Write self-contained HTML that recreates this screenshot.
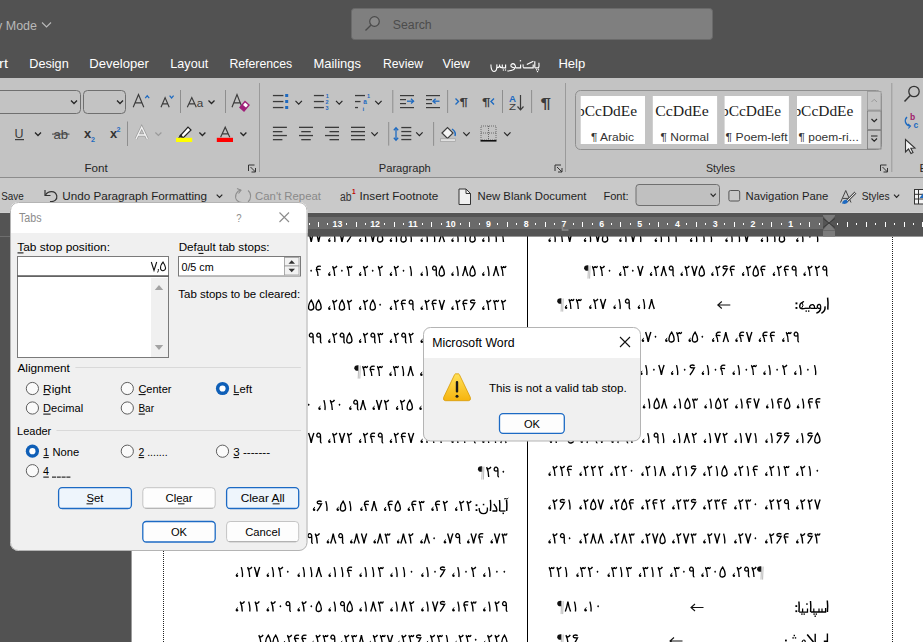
<!DOCTYPE html>
<html><head><meta charset="utf-8"><style>
html,body{margin:0;padding:0;width:923px;height:642px;overflow:hidden;background:#525252}
svg{display:block;font-family:"Liberation Sans",sans-serif}
</style></head><body>
<svg width="923" height="642" viewBox="0 0 923 642">
<rect x="0" y="0" width="923" height="78" fill="#525252" />
<rect x="0" y="78" width="923" height="100" fill="#c3c3c3" />
<rect x="0" y="177" width="923" height="1" fill="#8c8c8c" />
<rect x="0" y="178" width="923" height="35" fill="#c9c9c9" />
<rect x="0" y="212" width="923" height="1" fill="#cfcfcf" />
<text x="-4" y="29.5" font-size="12.5" fill="#b9b9b9" textLength="41" lengthAdjust="spacingAndGlyphs" >y Mode</text>
<path d="M42,22.5 L46.5,27 L51,22.5" fill="none" stroke="#b9b9b9" stroke-width="1.1" />
<rect x="351.5" y="8.5" width="361" height="31" fill="#7f7f7f" stroke="#6a6a6a" stroke-width="1" rx="3" />
<circle cx="374.5" cy="21.5" r="4.8" fill="#8a8a8a" stroke="#4a4a4a" stroke-width="1.2"/>
<line x1="370.8" y1="25.2" x2="365.5" y2="30.5" stroke="#4a4a4a" stroke-width="1.3" />
<text x="392.8" y="29" font-size="12.3" fill="#4c4c4c" textLength="38.9" lengthAdjust="spacingAndGlyphs" >Search</text>
<text x="-1" y="68" font-size="12.6" fill="#ffffff" textLength="9" lengthAdjust="spacingAndGlyphs" >rt</text>
<text x="29.3" y="68" font-size="12.6" fill="#ffffff" textLength="39.4" lengthAdjust="spacingAndGlyphs" >Design</text>
<text x="89.3" y="68" font-size="12.6" fill="#ffffff" textLength="59.6" lengthAdjust="spacingAndGlyphs" >Developer</text>
<text x="170.3" y="68" font-size="12.6" fill="#ffffff" textLength="37.9" lengthAdjust="spacingAndGlyphs" >Layout</text>
<text x="229.4" y="68" font-size="12.6" fill="#ffffff" textLength="62.8" lengthAdjust="spacingAndGlyphs" >References</text>
<text x="313.4" y="68" font-size="12.6" fill="#ffffff" textLength="47.6" lengthAdjust="spacingAndGlyphs" >Mailings</text>
<text x="383" y="68" font-size="12.6" fill="#ffffff" textLength="40" lengthAdjust="spacingAndGlyphs" >Review</text>
<text x="442.4" y="68" font-size="12.6" fill="#ffffff" textLength="27.3" lengthAdjust="spacingAndGlyphs" >View</text>
<text x="558.4" y="68" font-size="12.6" fill="#ffffff" textLength="26.9" lengthAdjust="spacingAndGlyphs" >Help</text>
<path d="M538.9,62.8 Q539.3,66.5 538.6,67.8 L534.8,67.8" fill="none" stroke="#ffffff" stroke-width="1.15" />
<path d="M534.8,61.3 L534.8,67.8" fill="none" stroke="#ffffff" stroke-width="1.15" />
<rect x="536" y="69.2" width="1.2" height="1.2" fill="#ffffff" />
<rect x="537.9" y="69.2" width="1.2" height="1.2" fill="#ffffff" />
<rect x="536.9" y="71" width="1.2" height="1.2" fill="#ffffff" />
<path d="M533.4,61.3 L526.8,64.6 M533.2,64.6 L533.2,67.8 L523.6,67.8 Q522.9,67.5 523.1,64.4" fill="none" stroke="#ffffff" stroke-width="1.15" />
<rect x="519.8" y="60.1" width="1.3" height="1.3" fill="#ffffff" />
<path d="M520.6,64.4 L520.6,67.8 L515.6,67.8" fill="none" stroke="#ffffff" stroke-width="1.15" />
<path d="M515.6,67.8 Q515.4,63.6 512.8,63.6 Q510.4,64 511.1,66.5 Q512.6,67.8 514.8,67.8 Q514.8,70.6 507.3,71" fill="none" stroke="#ffffff" stroke-width="1.1" />
<path d="M505.6,64.4 L505.6,67.8 L502.3,67.8" fill="none" stroke="#ffffff" stroke-width="1.15" />
<rect x="502.8" y="69.4" width="1.2" height="1.2" fill="#ffffff" />
<rect x="504.9" y="69.4" width="1.2" height="1.2" fill="#ffffff" />
<path d="M502.3,64.4 L502.3,67.8 Q500.2,67.9 499.6,66 L499.6,64.4 M499.6,66 Q499,67.9 497,67.6 L496.8,64.4 Q497.4,71.4 494,71.5 Q491,71.5 490.9,64.6" fill="none" stroke="#ffffff" stroke-width="1.1" />
<defs><path id="g0" d="M2.7,-5.2 L3.7,-6.4 L4.7,-5.2 L3.7,-4 Z" fill="#000"/><path id="g1" d="M2.9,-9.9 Q3.9,-6.5 4.1,-3.3 Q4.2,-1.5 3.9,0" fill="none" stroke="#000" stroke-width="1.35"/><path id="g2" d="M1.8,-9.9 Q3.8,-6 3.9,0 M2,-9.2 Q2.6,-8.1 4,-8.2 Q5.3,-8.4 6.1,-10.1" fill="none" stroke="#000" stroke-width="1.35"/><path id="g3" d="M1.4,-9.9 Q3.4,-6 3.4,0 M1.6,-9.2 Q2.1,-8.2 3,-8.3 Q3.7,-8.5 4.1,-9.9 M4.1,-9.9 Q4.4,-8.3 5.2,-8.3 Q6,-8.5 6.4,-10.2" fill="none" stroke="#000" stroke-width="1.3"/><path id="g4" d="M3.2,0 Q3.3,-3.5 1.6,-6.3 Q3.3,-6.9 5.8,-6.3 M1.9,-6.5 Q1.2,-8.5 2.8,-9.5 Q4.2,-10 6.1,-9.7" fill="none" stroke="#000" stroke-width="1.35"/><path id="g5" d="M3.9,-9.9 Q0.6,-5.5 1.3,-1.2 Q2,0.3 3.9,0 Q6.2,-0.3 6.4,-2.5 Q6.3,-6 3.9,-9.9 Z" fill="none" stroke="#000" stroke-width="1.35"/><path id="g6" d="M6.2,-9.4 Q4.3,-10.4 2.4,-9.7 Q1.2,-8.8 2.2,-7.6 Q3.6,-6.9 6,-7.2 Q4.3,-3.3 1.5,0" fill="none" stroke="#000" stroke-width="1.35"/><path id="g7" d="M1.2,-10 Q3,-5.2 3.8,0 Q4.6,-5.2 6.5,-10" fill="none" stroke="#000" stroke-width="1.4"/><path id="g8" d="M1.2,0 Q3,-4.8 3.8,-10 Q4.6,-4.8 6.5,0" fill="none" stroke="#000" stroke-width="1.4"/><path id="g9" d="M5.6,-6.3 Q3.3,-5.4 2.2,-6.6 Q1.4,-8.4 2.8,-9.6 Q4.8,-10.5 5.6,-8.3 Q5.9,-5 5.7,-1.5 Q5.8,0 6.8,-0.3" fill="none" stroke="#000" stroke-width="1.35"/><g id="gc"><path d="M2.9,-3.9 Q1.1,-3.2 1.2,-1.4" fill="none" stroke="#000" stroke-width="0.9"/><circle cx="2" cy="-1.2" r="1.2" fill="#000"/></g><path id="gd" d="M1.2,-1.6 h1.6 v1.6 h-1.6 Z" fill="#000"/><g id="gp"><path d="M3.9,-10.6 Q-0.6,-10.9 -0.4,-7.7 Q-0.1,-4.8 3.9,-5.2 Z" fill="#111"/><path d="M4,-10.2 L3.5,2.6 M5.6,-10.4 L5.1,2.6" fill="none" stroke="#a8a8a8" stroke-width="0.8"/></g></defs>
<rect x="131" y="236" width="792" height="406" fill="#ffffff" />
<rect x="131" y="236" width="1" height="406" fill="#9c9c9c" />
<line x1="163.5" y1="237" x2="163.5" y2="642" stroke="#222" stroke-width="1" stroke-dasharray="1 1"/>
<line x1="892.5" y1="237" x2="892.5" y2="642" stroke="#222" stroke-width="1" stroke-dasharray="1 1"/>
<rect x="527" y="236" width="1" height="406" fill="#000" />
<g><use href="#gc" x="235.0" y="242"/><use href="#g1" x="238.4" y="242"/><use href="#g8" x="245.8" y="242"/><use href="#g1" x="253.2" y="242"/><use href="#gc" x="265.8" y="242"/><use href="#g1" x="269.2" y="242"/><use href="#g7" x="276.6" y="242"/><use href="#g2" x="284.0" y="242"/><use href="#gc" x="296.6" y="242"/><use href="#g1" x="300.0" y="242"/><use href="#g7" x="307.4" y="242"/><use href="#g7" x="314.8" y="242"/><use href="#gc" x="327.4" y="242"/><use href="#g1" x="330.8" y="242"/><use href="#g7" x="338.2" y="242"/><use href="#g6" x="345.6" y="242"/><use href="#gc" x="358.2" y="242"/><use href="#g1" x="361.6" y="242"/><use href="#g7" x="369.0" y="242"/><use href="#g5" x="376.4" y="242"/><use href="#gc" x="389.0" y="242"/><use href="#g1" x="392.4" y="242"/><use href="#g5" x="399.8" y="242"/><use href="#g1" x="407.2" y="242"/><use href="#gc" x="419.8" y="242"/><use href="#g1" x="423.2" y="242"/><use href="#g1" x="430.6" y="242"/><use href="#g8" x="438.0" y="242"/><use href="#gc" x="450.6" y="242"/><use href="#g1" x="454.0" y="242"/><use href="#g1" x="461.4" y="242"/><use href="#g5" x="468.8" y="242"/><use href="#gc" x="481.4" y="242"/><use href="#g1" x="484.8" y="242"/><use href="#g1" x="492.2" y="242"/><use href="#g2" x="499.6" y="242"/><use href="#gc" x="173.4" y="276"/><use href="#g2" x="176.8" y="276"/><use href="#g1" x="184.2" y="276"/><use href="#g3" x="191.6" y="276"/><use href="#gc" x="204.2" y="276"/><use href="#g2" x="207.6" y="276"/><use href="#g1" x="215.0" y="276"/><use href="#g2" x="222.4" y="276"/><use href="#gc" x="235.0" y="276"/><use href="#g2" x="238.4" y="276"/><use href="#g0" x="245.8" y="276"/><use href="#g9" x="253.2" y="276"/><use href="#gc" x="265.8" y="276"/><use href="#g2" x="269.2" y="276"/><use href="#g0" x="276.6" y="276"/><use href="#g5" x="284.0" y="276"/><use href="#gc" x="296.6" y="276"/><use href="#g2" x="300.0" y="276"/><use href="#g0" x="307.4" y="276"/><use href="#g4" x="314.8" y="276"/><use href="#gc" x="327.4" y="276"/><use href="#g2" x="330.8" y="276"/><use href="#g0" x="338.2" y="276"/><use href="#g3" x="345.6" y="276"/><use href="#gc" x="358.2" y="276"/><use href="#g2" x="361.6" y="276"/><use href="#g0" x="369.0" y="276"/><use href="#g2" x="376.4" y="276"/><use href="#gc" x="389.0" y="276"/><use href="#g2" x="392.4" y="276"/><use href="#g0" x="399.8" y="276"/><use href="#g1" x="407.2" y="276"/><use href="#gc" x="419.8" y="276"/><use href="#g1" x="423.2" y="276"/><use href="#g9" x="430.6" y="276"/><use href="#g5" x="438.0" y="276"/><use href="#gc" x="450.6" y="276"/><use href="#g1" x="454.0" y="276"/><use href="#g8" x="461.4" y="276"/><use href="#g5" x="468.8" y="276"/><use href="#gc" x="481.4" y="276"/><use href="#g1" x="484.8" y="276"/><use href="#g8" x="492.2" y="276"/><use href="#g3" x="499.6" y="276"/><use href="#gc" x="265.8" y="310"/><use href="#g2" x="269.2" y="310"/><use href="#g5" x="276.6" y="310"/><use href="#g8" x="284.0" y="310"/><use href="#gc" x="296.6" y="310"/><use href="#g2" x="300.0" y="310"/><use href="#g5" x="307.4" y="310"/><use href="#g5" x="314.8" y="310"/><use href="#gc" x="327.4" y="310"/><use href="#g2" x="330.8" y="310"/><use href="#g5" x="338.2" y="310"/><use href="#g2" x="345.6" y="310"/><use href="#gc" x="358.2" y="310"/><use href="#g2" x="361.6" y="310"/><use href="#g5" x="369.0" y="310"/><use href="#g0" x="376.4" y="310"/><use href="#gc" x="389.0" y="310"/><use href="#g2" x="392.4" y="310"/><use href="#g4" x="399.8" y="310"/><use href="#g9" x="407.2" y="310"/><use href="#gc" x="419.8" y="310"/><use href="#g2" x="423.2" y="310"/><use href="#g4" x="430.6" y="310"/><use href="#g7" x="438.0" y="310"/><use href="#gc" x="450.6" y="310"/><use href="#g2" x="454.0" y="310"/><use href="#g4" x="461.4" y="310"/><use href="#g6" x="468.8" y="310"/><use href="#gc" x="481.4" y="310"/><use href="#g2" x="484.8" y="310"/><use href="#g3" x="492.2" y="310"/><use href="#g2" x="499.6" y="310"/><use href="#gc" x="265.8" y="343"/><use href="#g2" x="269.2" y="343"/><use href="#g0" x="276.6" y="343"/><use href="#g9" x="284.0" y="343"/><use href="#gc" x="296.6" y="343"/><use href="#g2" x="300.0" y="343"/><use href="#g9" x="307.4" y="343"/><use href="#g9" x="314.8" y="343"/><use href="#gc" x="327.4" y="343"/><use href="#g2" x="330.8" y="343"/><use href="#g9" x="338.2" y="343"/><use href="#g5" x="345.6" y="343"/><use href="#gc" x="358.2" y="343"/><use href="#g2" x="361.6" y="343"/><use href="#g9" x="369.0" y="343"/><use href="#g3" x="376.4" y="343"/><use href="#gc" x="389.0" y="343"/><use href="#g2" x="392.4" y="343"/><use href="#g9" x="399.8" y="343"/><use href="#g2" x="407.2" y="343"/><use href="#gc" x="419.8" y="343"/><use href="#g2" x="423.2" y="343"/><use href="#g8" x="430.6" y="343"/><use href="#g8" x="438.0" y="343"/><use href="#gc" x="450.6" y="343"/><use href="#g2" x="454.0" y="343"/><use href="#g8" x="461.4" y="343"/><use href="#g6" x="468.8" y="343"/><use href="#gc" x="481.4" y="343"/><use href="#g2" x="484.8" y="343"/><use href="#g8" x="492.2" y="343"/><use href="#g5" x="499.6" y="343"/><use href="#gp" x="354.7" y="376"/><use href="#g3" x="361.2" y="376"/><use href="#g4" x="368.6" y="376"/><use href="#g3" x="376.0" y="376"/><use href="#gc" x="388.6" y="376"/><use href="#g3" x="392.0" y="376"/><use href="#g1" x="399.4" y="376"/><use href="#g8" x="406.8" y="376"/><use href="#gc" x="419.4" y="376"/><use href="#g3" x="422.8" y="376"/><use href="#g1" x="430.2" y="376"/><use href="#g7" x="437.6" y="376"/><use href="#gc" x="450.2" y="376"/><use href="#g3" x="453.6" y="376"/><use href="#g1" x="461.0" y="376"/><use href="#g5" x="468.4" y="376"/><use href="#gc" x="481.0" y="376"/><use href="#g3" x="484.4" y="376"/><use href="#g1" x="491.8" y="376"/><use href="#g4" x="499.2" y="376"/><use href="#gc" x="286.8" y="410"/><use href="#g1" x="290.2" y="410"/><use href="#g3" x="297.6" y="410"/><use href="#g0" x="305.0" y="410"/><use href="#gc" x="317.6" y="410"/><use href="#g1" x="321.0" y="410"/><use href="#g2" x="328.4" y="410"/><use href="#g0" x="335.8" y="410"/><use href="#gc" x="348.4" y="410"/><use href="#g9" x="351.8" y="410"/><use href="#g8" x="359.2" y="410"/><use href="#gc" x="371.8" y="410"/><use href="#g7" x="375.2" y="410"/><use href="#g2" x="382.6" y="410"/><use href="#gc" x="395.2" y="410"/><use href="#g2" x="398.6" y="410"/><use href="#g5" x="406.0" y="410"/><use href="#gc" x="418.6" y="410"/><use href="#g2" x="422.0" y="410"/><use href="#g4" x="429.4" y="410"/><use href="#gc" x="442.0" y="410"/><use href="#g1" x="445.4" y="410"/><use href="#g9" x="452.8" y="410"/><use href="#gc" x="465.4" y="410"/><use href="#g1" x="468.8" y="410"/><use href="#g6" x="476.2" y="410"/><use href="#gc" x="488.8" y="410"/><use href="#g1" x="492.2" y="410"/><use href="#g5" x="499.6" y="410"/><use href="#gc" x="296.6" y="443"/><use href="#g2" x="300.0" y="443"/><use href="#g7" x="307.4" y="443"/><use href="#g9" x="314.8" y="443"/><use href="#gc" x="327.4" y="443"/><use href="#g2" x="330.8" y="443"/><use href="#g7" x="338.2" y="443"/><use href="#g2" x="345.6" y="443"/><use href="#gc" x="358.2" y="443"/><use href="#g2" x="361.6" y="443"/><use href="#g4" x="369.0" y="443"/><use href="#g9" x="376.4" y="443"/><use href="#gc" x="389.0" y="443"/><use href="#g2" x="392.4" y="443"/><use href="#g4" x="399.8" y="443"/><use href="#g7" x="407.2" y="443"/><use href="#gc" x="419.8" y="443"/><use href="#g2" x="423.2" y="443"/><use href="#g4" x="430.6" y="443"/><use href="#g4" x="438.0" y="443"/><use href="#gc" x="450.6" y="443"/><use href="#g2" x="454.0" y="443"/><use href="#g3" x="461.4" y="443"/><use href="#g9" x="468.8" y="443"/><use href="#gc" x="481.4" y="443"/><use href="#g2" x="484.8" y="443"/><use href="#g3" x="492.2" y="443"/><use href="#g8" x="499.6" y="443"/><use href="#gp" x="478.3" y="477"/><use href="#g2" x="484.8" y="477"/><use href="#g9" x="492.2" y="477"/><use href="#g0" x="499.6" y="477"/><use href="#gc" x="217.3" y="511"/><use href="#g7" x="220.7" y="511"/><use href="#g8" x="228.1" y="511"/><use href="#gc" x="241.0" y="511"/><use href="#g7" x="244.4" y="511"/><use href="#g7" x="251.8" y="511"/><use href="#gc" x="264.7" y="511"/><use href="#g7" x="268.1" y="511"/><use href="#g1" x="275.5" y="511"/><use href="#gc" x="288.4" y="511"/><use href="#g7" x="291.8" y="511"/><use href="#g0" x="299.2" y="511"/><use href="#gc" x="312.1" y="511"/><use href="#g6" x="315.5" y="511"/><use href="#g1" x="322.9" y="511"/><use href="#gc" x="335.8" y="511"/><use href="#g5" x="339.2" y="511"/><use href="#g1" x="346.6" y="511"/><use href="#gc" x="359.5" y="511"/><use href="#g4" x="362.9" y="511"/><use href="#g8" x="370.3" y="511"/><use href="#gc" x="383.2" y="511"/><use href="#g4" x="386.6" y="511"/><use href="#g5" x="394.0" y="511"/><use href="#gc" x="406.9" y="511"/><use href="#g4" x="410.3" y="511"/><use href="#g3" x="417.7" y="511"/><use href="#gc" x="430.6" y="511"/><use href="#g4" x="434.0" y="511"/><use href="#g2" x="441.4" y="511"/><use href="#gc" x="454.3" y="511"/><use href="#g2" x="457.7" y="511"/><use href="#g2" x="465.1" y="511"/><use href="#gc" x="302.6" y="543.5"/><use href="#g9" x="306.0" y="543.5"/><use href="#g2" x="313.4" y="543.5"/><use href="#gc" x="326.0" y="543.5"/><use href="#g8" x="329.4" y="543.5"/><use href="#g9" x="336.8" y="543.5"/><use href="#gc" x="349.4" y="543.5"/><use href="#g8" x="352.8" y="543.5"/><use href="#g7" x="360.2" y="543.5"/><use href="#gc" x="372.8" y="543.5"/><use href="#g8" x="376.2" y="543.5"/><use href="#g3" x="383.6" y="543.5"/><use href="#gc" x="396.2" y="543.5"/><use href="#g8" x="399.6" y="543.5"/><use href="#g2" x="407.0" y="543.5"/><use href="#gc" x="419.6" y="543.5"/><use href="#g8" x="423.0" y="543.5"/><use href="#g0" x="430.4" y="543.5"/><use href="#gc" x="443.0" y="543.5"/><use href="#g7" x="446.4" y="543.5"/><use href="#g9" x="453.8" y="543.5"/><use href="#gc" x="466.4" y="543.5"/><use href="#g7" x="469.8" y="543.5"/><use href="#g4" x="477.2" y="543.5"/><use href="#gc" x="489.8" y="543.5"/><use href="#g7" x="493.2" y="543.5"/><use href="#g3" x="500.6" y="543.5"/><use href="#gc" x="235.0" y="577"/><use href="#g1" x="238.4" y="577"/><use href="#g2" x="245.8" y="577"/><use href="#g7" x="253.2" y="577"/><use href="#gc" x="265.9" y="577"/><use href="#g1" x="269.3" y="577"/><use href="#g2" x="276.7" y="577"/><use href="#g0" x="284.1" y="577"/><use href="#gc" x="296.8" y="577"/><use href="#g1" x="300.2" y="577"/><use href="#g1" x="307.6" y="577"/><use href="#g8" x="315.0" y="577"/><use href="#gc" x="327.8" y="577"/><use href="#g1" x="331.2" y="577"/><use href="#g1" x="338.6" y="577"/><use href="#g4" x="346.0" y="577"/><use href="#gc" x="358.7" y="577"/><use href="#g1" x="362.1" y="577"/><use href="#g1" x="369.5" y="577"/><use href="#g3" x="376.9" y="577"/><use href="#gc" x="389.6" y="577"/><use href="#g1" x="393.0" y="577"/><use href="#g1" x="400.4" y="577"/><use href="#g0" x="407.8" y="577"/><use href="#gc" x="420.5" y="577"/><use href="#g1" x="423.9" y="577"/><use href="#g0" x="431.3" y="577"/><use href="#g6" x="438.7" y="577"/><use href="#gc" x="451.5" y="577"/><use href="#g1" x="454.9" y="577"/><use href="#g0" x="462.3" y="577"/><use href="#g2" x="469.7" y="577"/><use href="#gc" x="482.4" y="577"/><use href="#g1" x="485.8" y="577"/><use href="#g0" x="493.2" y="577"/><use href="#g0" x="500.6" y="577"/><use href="#gc" x="235.0" y="611.5"/><use href="#g2" x="238.4" y="611.5"/><use href="#g1" x="245.8" y="611.5"/><use href="#g2" x="253.2" y="611.5"/><use href="#gc" x="265.9" y="611.5"/><use href="#g2" x="269.3" y="611.5"/><use href="#g0" x="276.7" y="611.5"/><use href="#g9" x="284.1" y="611.5"/><use href="#gc" x="296.8" y="611.5"/><use href="#g2" x="300.2" y="611.5"/><use href="#g0" x="307.6" y="611.5"/><use href="#g5" x="315.0" y="611.5"/><use href="#gc" x="327.8" y="611.5"/><use href="#g1" x="331.2" y="611.5"/><use href="#g9" x="338.6" y="611.5"/><use href="#g5" x="346.0" y="611.5"/><use href="#gc" x="358.7" y="611.5"/><use href="#g1" x="362.1" y="611.5"/><use href="#g8" x="369.5" y="611.5"/><use href="#g3" x="376.9" y="611.5"/><use href="#gc" x="389.6" y="611.5"/><use href="#g1" x="393.0" y="611.5"/><use href="#g8" x="400.4" y="611.5"/><use href="#g2" x="407.8" y="611.5"/><use href="#gc" x="420.5" y="611.5"/><use href="#g1" x="423.9" y="611.5"/><use href="#g7" x="431.3" y="611.5"/><use href="#g6" x="438.7" y="611.5"/><use href="#gc" x="451.5" y="611.5"/><use href="#g1" x="454.9" y="611.5"/><use href="#g4" x="462.3" y="611.5"/><use href="#g3" x="469.7" y="611.5"/><use href="#gc" x="482.4" y="611.5"/><use href="#g1" x="485.8" y="611.5"/><use href="#g2" x="493.2" y="611.5"/><use href="#g9" x="500.6" y="611.5"/><use href="#g2" x="257.0" y="645"/><use href="#g5" x="264.4" y="645"/><use href="#g5" x="271.8" y="645"/><use href="#gc" x="282.2" y="645"/><use href="#g2" x="285.6" y="645"/><use href="#g4" x="293.0" y="645"/><use href="#g4" x="300.4" y="645"/><use href="#gc" x="310.8" y="645"/><use href="#g2" x="314.2" y="645"/><use href="#g3" x="321.6" y="645"/><use href="#g9" x="329.0" y="645"/><use href="#gc" x="339.4" y="645"/><use href="#g2" x="342.8" y="645"/><use href="#g3" x="350.2" y="645"/><use href="#g8" x="357.6" y="645"/><use href="#gc" x="368.0" y="645"/><use href="#g2" x="371.4" y="645"/><use href="#g3" x="378.8" y="645"/><use href="#g7" x="386.2" y="645"/><use href="#gc" x="396.6" y="645"/><use href="#g2" x="400.0" y="645"/><use href="#g3" x="407.4" y="645"/><use href="#g6" x="414.8" y="645"/><use href="#gc" x="425.2" y="645"/><use href="#g2" x="428.6" y="645"/><use href="#g3" x="436.0" y="645"/><use href="#g1" x="443.4" y="645"/><use href="#gc" x="453.8" y="645"/><use href="#g2" x="457.2" y="645"/><use href="#g3" x="464.6" y="645"/><use href="#g0" x="472.0" y="645"/><use href="#gc" x="482.4" y="645"/><use href="#g2" x="485.8" y="645"/><use href="#g2" x="493.2" y="645"/><use href="#g5" x="500.6" y="645"/><use href="#gc" x="547.7" y="242"/><use href="#g1" x="551.1" y="242"/><use href="#g2" x="558.5" y="242"/><use href="#g7" x="565.9" y="242"/><use href="#gc" x="583.1" y="242"/><use href="#g1" x="586.5" y="242"/><use href="#g7" x="593.9" y="242"/><use href="#g5" x="601.3" y="242"/><use href="#gc" x="618.5" y="242"/><use href="#g1" x="621.9" y="242"/><use href="#g7" x="629.3" y="242"/><use href="#g1" x="636.7" y="242"/><use href="#gc" x="653.9" y="242"/><use href="#g1" x="657.3" y="242"/><use href="#g1" x="664.7" y="242"/><use href="#g1" x="672.1" y="242"/><use href="#gc" x="689.2" y="242"/><use href="#g1" x="692.6" y="242"/><use href="#g1" x="700.0" y="242"/><use href="#g1" x="707.4" y="242"/><use href="#gc" x="724.6" y="242"/><use href="#g1" x="728.0" y="242"/><use href="#g1" x="735.4" y="242"/><use href="#g7" x="742.8" y="242"/><use href="#gc" x="760.0" y="242"/><use href="#g1" x="763.4" y="242"/><use href="#g1" x="770.8" y="242"/><use href="#g5" x="778.2" y="242"/><use href="#gc" x="795.4" y="242"/><use href="#g1" x="798.8" y="242"/><use href="#g0" x="806.2" y="242"/><use href="#g1" x="813.6" y="242"/><use href="#gp" x="584.5" y="276"/><use href="#g3" x="591.0" y="276"/><use href="#g2" x="598.4" y="276"/><use href="#g0" x="605.8" y="276"/><use href="#gc" x="618.3" y="276"/><use href="#g3" x="621.7" y="276"/><use href="#g0" x="629.1" y="276"/><use href="#g7" x="636.5" y="276"/><use href="#gc" x="649.1" y="276"/><use href="#g2" x="652.5" y="276"/><use href="#g8" x="659.9" y="276"/><use href="#g9" x="667.3" y="276"/><use href="#gc" x="679.8" y="276"/><use href="#g2" x="683.2" y="276"/><use href="#g7" x="690.6" y="276"/><use href="#g5" x="698.0" y="276"/><use href="#gc" x="710.5" y="276"/><use href="#g2" x="713.9" y="276"/><use href="#g6" x="721.3" y="276"/><use href="#g4" x="728.7" y="276"/><use href="#gc" x="741.2" y="276"/><use href="#g2" x="744.6" y="276"/><use href="#g5" x="752.0" y="276"/><use href="#g4" x="759.4" y="276"/><use href="#gc" x="772.0" y="276"/><use href="#g2" x="775.4" y="276"/><use href="#g4" x="782.8" y="276"/><use href="#g9" x="790.2" y="276"/><use href="#gc" x="802.7" y="276"/><use href="#g2" x="806.1" y="276"/><use href="#g2" x="813.5" y="276"/><use href="#g9" x="820.9" y="276"/><use href="#gp" x="557.6" y="309"/><use href="#gc" x="564.1" y="309"/><use href="#g3" x="567.5" y="309"/><use href="#g3" x="574.9" y="309"/><use href="#gc" x="588.4" y="309"/><use href="#g2" x="591.8" y="309"/><use href="#g7" x="599.2" y="309"/><use href="#gc" x="612.7" y="309"/><use href="#g1" x="616.1" y="309"/><use href="#g9" x="623.5" y="309"/><use href="#gc" x="637.0" y="309"/><use href="#g1" x="640.4" y="309"/><use href="#g8" x="647.8" y="309"/><use href="#gc" x="570.8" y="342"/><use href="#g9" x="574.2" y="342"/><use href="#g1" x="581.6" y="342"/><use href="#gc" x="594.2" y="342"/><use href="#g9" x="597.6" y="342"/><use href="#g0" x="605.0" y="342"/><use href="#gc" x="617.6" y="342"/><use href="#g8" x="621.0" y="342"/><use href="#g9" x="628.4" y="342"/><use href="#gc" x="641.0" y="342"/><use href="#g7" x="644.4" y="342"/><use href="#g0" x="651.8" y="342"/><use href="#gc" x="664.4" y="342"/><use href="#g5" x="667.8" y="342"/><use href="#g3" x="675.2" y="342"/><use href="#gc" x="687.8" y="342"/><use href="#g5" x="691.2" y="342"/><use href="#g0" x="698.6" y="342"/><use href="#gc" x="711.2" y="342"/><use href="#g4" x="714.6" y="342"/><use href="#g8" x="722.0" y="342"/><use href="#gc" x="734.6" y="342"/><use href="#g4" x="738.0" y="342"/><use href="#g7" x="745.4" y="342"/><use href="#gc" x="758.0" y="342"/><use href="#g4" x="761.4" y="342"/><use href="#g4" x="768.8" y="342"/><use href="#gc" x="781.4" y="342"/><use href="#g3" x="784.8" y="342"/><use href="#g9" x="792.2" y="342"/><use href="#gc" x="577.8" y="375"/><use href="#g1" x="581.2" y="375"/><use href="#g1" x="588.6" y="375"/><use href="#g0" x="596.0" y="375"/><use href="#gc" x="608.6" y="375"/><use href="#g1" x="612.0" y="375"/><use href="#g0" x="619.4" y="375"/><use href="#g9" x="626.8" y="375"/><use href="#gc" x="639.4" y="375"/><use href="#g1" x="642.8" y="375"/><use href="#g0" x="650.2" y="375"/><use href="#g7" x="657.6" y="375"/><use href="#gc" x="670.2" y="375"/><use href="#g1" x="673.6" y="375"/><use href="#g0" x="681.0" y="375"/><use href="#g6" x="688.4" y="375"/><use href="#gc" x="701.0" y="375"/><use href="#g1" x="704.4" y="375"/><use href="#g0" x="711.8" y="375"/><use href="#g4" x="719.2" y="375"/><use href="#gc" x="731.8" y="375"/><use href="#g1" x="735.2" y="375"/><use href="#g0" x="742.6" y="375"/><use href="#g3" x="750.0" y="375"/><use href="#gc" x="762.6" y="375"/><use href="#g1" x="766.0" y="375"/><use href="#g0" x="773.4" y="375"/><use href="#g2" x="780.8" y="375"/><use href="#gc" x="793.4" y="375"/><use href="#g1" x="796.8" y="375"/><use href="#g0" x="804.2" y="375"/><use href="#g1" x="811.6" y="375"/><use href="#gc" x="580.5" y="408.5"/><use href="#g1" x="583.9" y="408.5"/><use href="#g6" x="591.3" y="408.5"/><use href="#g2" x="598.7" y="408.5"/><use href="#gc" x="611.3" y="408.5"/><use href="#g1" x="614.7" y="408.5"/><use href="#g6" x="622.1" y="408.5"/><use href="#g0" x="629.5" y="408.5"/><use href="#gc" x="642.1" y="408.5"/><use href="#g1" x="645.5" y="408.5"/><use href="#g5" x="652.9" y="408.5"/><use href="#g8" x="660.3" y="408.5"/><use href="#gc" x="672.9" y="408.5"/><use href="#g1" x="676.3" y="408.5"/><use href="#g5" x="683.7" y="408.5"/><use href="#g3" x="691.1" y="408.5"/><use href="#gc" x="703.7" y="408.5"/><use href="#g1" x="707.1" y="408.5"/><use href="#g5" x="714.5" y="408.5"/><use href="#g2" x="721.9" y="408.5"/><use href="#gc" x="734.5" y="408.5"/><use href="#g1" x="737.9" y="408.5"/><use href="#g4" x="745.3" y="408.5"/><use href="#g7" x="752.7" y="408.5"/><use href="#gc" x="765.3" y="408.5"/><use href="#g1" x="768.7" y="408.5"/><use href="#g4" x="776.1" y="408.5"/><use href="#g5" x="783.5" y="408.5"/><use href="#gc" x="796.1" y="408.5"/><use href="#g1" x="799.5" y="408.5"/><use href="#g4" x="806.9" y="408.5"/><use href="#g4" x="814.3" y="408.5"/><use href="#gc" x="549.0" y="443"/><use href="#g2" x="552.4" y="443"/><use href="#g0" x="559.8" y="443"/><use href="#g5" x="567.2" y="443"/><use href="#gc" x="579.8" y="443"/><use href="#g1" x="583.2" y="443"/><use href="#g9" x="590.6" y="443"/><use href="#g7" x="598.0" y="443"/><use href="#gc" x="610.6" y="443"/><use href="#g1" x="614.0" y="443"/><use href="#g9" x="621.4" y="443"/><use href="#g4" x="628.8" y="443"/><use href="#gc" x="641.4" y="443"/><use href="#g1" x="644.8" y="443"/><use href="#g9" x="652.2" y="443"/><use href="#g1" x="659.6" y="443"/><use href="#gc" x="672.2" y="443"/><use href="#g1" x="675.6" y="443"/><use href="#g8" x="683.0" y="443"/><use href="#g2" x="690.4" y="443"/><use href="#gc" x="703.0" y="443"/><use href="#g1" x="706.4" y="443"/><use href="#g7" x="713.8" y="443"/><use href="#g2" x="721.2" y="443"/><use href="#gc" x="733.8" y="443"/><use href="#g1" x="737.2" y="443"/><use href="#g7" x="744.6" y="443"/><use href="#g1" x="752.0" y="443"/><use href="#gc" x="764.6" y="443"/><use href="#g1" x="768.0" y="443"/><use href="#g6" x="775.4" y="443"/><use href="#g6" x="782.8" y="443"/><use href="#gc" x="795.4" y="443"/><use href="#g1" x="798.8" y="443"/><use href="#g6" x="806.2" y="443"/><use href="#g5" x="813.6" y="443"/><use href="#gc" x="547.7" y="476"/><use href="#g2" x="551.1" y="476"/><use href="#g2" x="558.5" y="476"/><use href="#g4" x="565.9" y="476"/><use href="#gc" x="578.7" y="476"/><use href="#g2" x="582.1" y="476"/><use href="#g2" x="589.5" y="476"/><use href="#g2" x="596.9" y="476"/><use href="#gc" x="609.6" y="476"/><use href="#g2" x="613.0" y="476"/><use href="#g2" x="620.4" y="476"/><use href="#g0" x="627.8" y="476"/><use href="#gc" x="640.6" y="476"/><use href="#g2" x="644.0" y="476"/><use href="#g1" x="651.4" y="476"/><use href="#g8" x="658.8" y="476"/><use href="#gc" x="671.5" y="476"/><use href="#g2" x="674.9" y="476"/><use href="#g1" x="682.3" y="476"/><use href="#g6" x="689.7" y="476"/><use href="#gc" x="702.5" y="476"/><use href="#g2" x="705.9" y="476"/><use href="#g1" x="713.3" y="476"/><use href="#g5" x="720.7" y="476"/><use href="#gc" x="733.5" y="476"/><use href="#g2" x="736.9" y="476"/><use href="#g1" x="744.3" y="476"/><use href="#g4" x="751.7" y="476"/><use href="#gc" x="764.4" y="476"/><use href="#g2" x="767.8" y="476"/><use href="#g1" x="775.2" y="476"/><use href="#g3" x="782.6" y="476"/><use href="#gc" x="795.4" y="476"/><use href="#g2" x="798.8" y="476"/><use href="#g1" x="806.2" y="476"/><use href="#g0" x="813.6" y="476"/><use href="#gc" x="547.7" y="509.5"/><use href="#g2" x="551.1" y="509.5"/><use href="#g6" x="558.5" y="509.5"/><use href="#g1" x="565.9" y="509.5"/><use href="#gc" x="578.7" y="509.5"/><use href="#g2" x="582.1" y="509.5"/><use href="#g5" x="589.5" y="509.5"/><use href="#g7" x="596.9" y="509.5"/><use href="#gc" x="609.6" y="509.5"/><use href="#g2" x="613.0" y="509.5"/><use href="#g5" x="620.4" y="509.5"/><use href="#g4" x="627.8" y="509.5"/><use href="#gc" x="640.6" y="509.5"/><use href="#g2" x="644.0" y="509.5"/><use href="#g4" x="651.4" y="509.5"/><use href="#g2" x="658.8" y="509.5"/><use href="#gc" x="671.5" y="509.5"/><use href="#g2" x="674.9" y="509.5"/><use href="#g3" x="682.3" y="509.5"/><use href="#g6" x="689.7" y="509.5"/><use href="#gc" x="702.5" y="509.5"/><use href="#g2" x="705.9" y="509.5"/><use href="#g3" x="713.3" y="509.5"/><use href="#g4" x="720.7" y="509.5"/><use href="#gc" x="733.5" y="509.5"/><use href="#g2" x="736.9" y="509.5"/><use href="#g3" x="744.3" y="509.5"/><use href="#g0" x="751.7" y="509.5"/><use href="#gc" x="764.4" y="509.5"/><use href="#g2" x="767.8" y="509.5"/><use href="#g2" x="775.2" y="509.5"/><use href="#g9" x="782.6" y="509.5"/><use href="#gc" x="795.4" y="509.5"/><use href="#g2" x="798.8" y="509.5"/><use href="#g2" x="806.2" y="509.5"/><use href="#g7" x="813.6" y="509.5"/><use href="#gc" x="547.7" y="543.5"/><use href="#g2" x="551.1" y="543.5"/><use href="#g9" x="558.5" y="543.5"/><use href="#g0" x="565.9" y="543.5"/><use href="#gc" x="578.7" y="543.5"/><use href="#g2" x="582.1" y="543.5"/><use href="#g8" x="589.5" y="543.5"/><use href="#g8" x="596.9" y="543.5"/><use href="#gc" x="609.6" y="543.5"/><use href="#g2" x="613.0" y="543.5"/><use href="#g8" x="620.4" y="543.5"/><use href="#g3" x="627.8" y="543.5"/><use href="#gc" x="640.6" y="543.5"/><use href="#g2" x="644.0" y="543.5"/><use href="#g7" x="651.4" y="543.5"/><use href="#g5" x="658.8" y="543.5"/><use href="#gc" x="671.5" y="543.5"/><use href="#g2" x="674.9" y="543.5"/><use href="#g7" x="682.3" y="543.5"/><use href="#g3" x="689.7" y="543.5"/><use href="#gc" x="702.5" y="543.5"/><use href="#g2" x="705.9" y="543.5"/><use href="#g7" x="713.3" y="543.5"/><use href="#g1" x="720.7" y="543.5"/><use href="#gc" x="733.5" y="543.5"/><use href="#g2" x="736.9" y="543.5"/><use href="#g7" x="744.3" y="543.5"/><use href="#g0" x="751.7" y="543.5"/><use href="#gc" x="764.4" y="543.5"/><use href="#g2" x="767.8" y="543.5"/><use href="#g6" x="775.2" y="543.5"/><use href="#g4" x="782.6" y="543.5"/><use href="#gc" x="795.4" y="543.5"/><use href="#g2" x="798.8" y="543.5"/><use href="#g6" x="806.2" y="543.5"/><use href="#g3" x="813.6" y="543.5"/><use href="#g3" x="547.7" y="577"/><use href="#g2" x="555.1" y="577"/><use href="#g1" x="562.5" y="577"/><use href="#gc" x="575.6" y="577"/><use href="#g3" x="579.0" y="577"/><use href="#g2" x="586.4" y="577"/><use href="#g0" x="593.8" y="577"/><use href="#gc" x="606.8" y="577"/><use href="#g3" x="610.2" y="577"/><use href="#g1" x="617.6" y="577"/><use href="#g3" x="625.0" y="577"/><use href="#gc" x="638.1" y="577"/><use href="#g3" x="641.5" y="577"/><use href="#g1" x="648.9" y="577"/><use href="#g2" x="656.3" y="577"/><use href="#gc" x="669.4" y="577"/><use href="#g3" x="672.8" y="577"/><use href="#g0" x="680.2" y="577"/><use href="#g9" x="687.6" y="577"/><use href="#gc" x="700.6" y="577"/><use href="#g3" x="704.0" y="577"/><use href="#g0" x="711.4" y="577"/><use href="#g5" x="718.8" y="577"/><use href="#gc" x="731.9" y="577"/><use href="#g2" x="735.3" y="577"/><use href="#g9" x="742.7" y="577"/><use href="#g2" x="750.1" y="577"/><use href="#gp" x="757.5" y="577"/><use href="#gp" x="557.6" y="611.5"/><use href="#g8" x="564.1" y="611.5"/><use href="#g1" x="571.5" y="611.5"/><use href="#gc" x="583.6" y="611.5"/><use href="#g1" x="587.0" y="611.5"/><use href="#g0" x="594.4" y="611.5"/><use href="#gp" x="557.6" y="645"/><use href="#g2" x="564.1" y="645"/><use href="#g6" x="571.5" y="645"/></g>
<path d="M730.3,305 L717.8,305 M721.8,301.5 L717.8,305 L721.8,308.5" fill="none" stroke="#111" stroke-width="1.1" />
<path d="M703.5,607.5 L691,607.5 M695,604.0 L691,607.5 L695,611.0" fill="none" stroke="#111" stroke-width="1.1" />
<path d="M682.5,641 L670,641 M674,637.5 L670,641 L674,644.5" fill="none" stroke="#111" stroke-width="1.1" />
<path d="M827.6,297.6 Q828.4,303 827.8,309.6" fill="none" stroke="#000" stroke-width="1.5" />
<path d="M825,306.4 Q825.6,311.2 821.4,313.3" fill="none" stroke="#000" stroke-width="1.5" />
<path d="M820.6,308.3 Q817,309 817.3,306.2 Q818,303.9 820,304.6 Q821.3,306 820.6,309 Q819.6,312.5 816.3,313.2" fill="none" stroke="#000" stroke-width="1.35" />
<path d="M817,308.3 L814.6,308.3 Q809.2,309 809.6,306.6 Q810.5,304.3 813,304.7 Q814.8,305.5 814.6,308.3" fill="none" stroke="#000" stroke-width="1.3" />
<path d="M809.8,308.3 L805,308.3" fill="none" stroke="#000" stroke-width="1.3" />
<rect x="805.5" y="310.4" width="1.4" height="1.4" fill="#000" />
<rect x="808" y="310.4" width="1.4" height="1.4" fill="#000" />
<path d="M805.2,308.3 Q800.2,309.6 799.7,306.8 Q799.6,303.6 802,302.6 Q803.4,302.2 803.6,301.2" fill="none" stroke="#000" stroke-width="1.35" />
<path d="M801.4,308.4 Q804,305.6 802.4,303.2" fill="none" stroke="#000" stroke-width="1.0" />
<rect x="795.5" y="302.4" width="1.9" height="1.9" fill="#000" />
<rect x="795.5" y="307" width="1.9" height="1.9" fill="#000" />
<path d="M506.5,499.8 Q507.2,505 506.6,511" fill="none" stroke="#000" stroke-width="1.5" />
<path d="M504,499.2 Q505,498 506,498.8 Q507,499.6 508.3,498" fill="none" stroke="#000" stroke-width="1.0" />
<path d="M505.4,511 L499.6,511" fill="none" stroke="#000" stroke-width="1.3" />
<path d="M499.5,500 Q500.1,505 499.6,511" fill="none" stroke="#000" stroke-width="1.45" />
<rect x="502.5" y="512.6" width="1.5" height="1.5" fill="#000" />
<path d="M493.8,504 Q497.6,508 496.6,511 L492.4,511" fill="none" stroke="#000" stroke-width="1.35" />
<path d="M490.4,499.8 Q491,505 490.4,511" fill="none" stroke="#000" stroke-width="1.45" />
<path d="M487.3,507.5 Q488.1,513.6 483.5,513.7 Q479,513.6 479.2,508" fill="none" stroke="#000" stroke-width="1.35" />
<rect x="482.8" y="503.8" width="1.5" height="1.5" fill="#000" />
<rect x="475.6" y="504.3" width="1.8" height="1.8" fill="#000" />
<rect x="475.6" y="509.2" width="1.8" height="1.8" fill="#000" />
<path d="M827.3,600.5 Q828,606 827.4,612" fill="none" stroke="#000" stroke-width="1.5" />
<path d="M825.6,608 L825.6,612 L810.8,612" fill="none" stroke="#000" stroke-width="1.3" />
<path d="M822,608.6 L822,612 M819,608.6 L819,612 M813.8,608.6 L813.8,612" fill="none" stroke="#000" stroke-width="1.2" />
<path d="M810.5,601 Q811.1,606 810.6,612" fill="none" stroke="#000" stroke-width="1.45" />
<path d="M807.5,608.6 L807.5,612 L799.2,612 M802.6,608.6 L802.6,612" fill="none" stroke="#000" stroke-width="1.25" />
<path d="M798.9,601.5 Q799.5,606 799,612" fill="none" stroke="#000" stroke-width="1.45" />
<rect x="813.4" y="613.4" width="1.4" height="1.4" fill="#000" />
<rect x="815.6" y="613.4" width="1.4" height="1.4" fill="#000" />
<rect x="814.5" y="615.5" width="1.4" height="1.4" fill="#000" />
<rect x="806.2" y="603.3" width="1.5" height="1.5" fill="#000" />
<rect x="801.2" y="613.4" width="1.4" height="1.4" fill="#000" />
<rect x="803.5" y="613.4" width="1.4" height="1.4" fill="#000" />
<rect x="795.4" y="605.2" width="1.8" height="1.8" fill="#000" />
<rect x="795.4" y="610.3" width="1.8" height="1.8" fill="#000" />
<path d="M827.4,633.5 L827.4,642 M827.4,641.3 L823.8,641.3" fill="none" stroke="#000" stroke-width="1.4" />
<path d="M807.2,634.5 Q810,638 813.5,642" fill="none" stroke="#000" stroke-width="1.6" />
<path d="M815.2,633.7 L815.2,642" fill="none" stroke="#000" stroke-width="1.4" />
<rect x="793.6" y="634.8" width="1.4" height="1.4" fill="#000" />
<rect x="792.4" y="637.2" width="1.4" height="1.4" fill="#000" />
<rect x="794.8" y="637.2" width="1.4" height="1.4" fill="#000" />
<path d="M802,642.5 Q802.5,639.8 804,640 Q805.5,640.4 805.2,642.5" fill="none" stroke="#000" stroke-width="1.2" />
<rect x="785" y="639.6" width="1.8" height="1.8" fill="#000" />
<rect x="0" y="213" width="923" height="23.6" fill="#545454" />
<rect x="164" y="217" width="659" height="12" fill="#6a6a6a" />
<rect x="0" y="236" width="131" height="1" fill="#6e6e6e" />
<g><rect x="922" y="222" width="1" height="5" fill="#ffffff"/><rect x="913" y="223" width="1" height="2" fill="#ffffff"/><rect x="904" y="222" width="1" height="5" fill="#ffffff"/><rect x="894" y="223" width="1" height="2" fill="#ffffff"/><rect x="885" y="222" width="1" height="5" fill="#ffffff"/><rect x="875" y="223" width="1" height="2" fill="#ffffff"/><rect x="866" y="222" width="1" height="5" fill="#ffffff"/><rect x="856" y="223" width="1" height="2" fill="#ffffff"/><rect x="847" y="222" width="1" height="5" fill="#ffffff"/><rect x="837" y="223" width="1" height="2" fill="#ffffff"/><rect x="819" y="223" width="1" height="2" fill="#ffffff"/><rect x="809" y="222" width="1" height="5" fill="#ffffff"/><rect x="800" y="223" width="1" height="2" fill="#ffffff"/><text x="790.7" y="226.6" font-size="8.8" font-weight="bold" fill="#ffffff" text-anchor="middle">1</text><rect x="781" y="223" width="1" height="2" fill="#ffffff"/><rect x="771" y="222" width="1" height="5" fill="#ffffff"/><rect x="762" y="223" width="1" height="2" fill="#ffffff"/><text x="752.9" y="226.6" font-size="8.8" font-weight="bold" fill="#ffffff" text-anchor="middle">2</text><rect x="743" y="223" width="1" height="2" fill="#ffffff"/><rect x="734" y="222" width="1" height="5" fill="#ffffff"/><rect x="724" y="223" width="1" height="2" fill="#ffffff"/><text x="715.2" y="226.6" font-size="8.8" font-weight="bold" fill="#ffffff" text-anchor="middle">3</text><rect x="705" y="223" width="1" height="2" fill="#ffffff"/><rect x="696" y="222" width="1" height="5" fill="#ffffff"/><rect x="686" y="223" width="1" height="2" fill="#ffffff"/><text x="677.4" y="226.6" font-size="8.8" font-weight="bold" fill="#ffffff" text-anchor="middle">4</text><rect x="667" y="223" width="1" height="2" fill="#ffffff"/><rect x="658" y="222" width="1" height="5" fill="#ffffff"/><rect x="649" y="223" width="1" height="2" fill="#ffffff"/><text x="639.6" y="226.6" font-size="8.8" font-weight="bold" fill="#ffffff" text-anchor="middle">5</text><rect x="630" y="223" width="1" height="2" fill="#ffffff"/><rect x="620" y="222" width="1" height="5" fill="#ffffff"/><rect x="611" y="223" width="1" height="2" fill="#ffffff"/><text x="601.8" y="226.6" font-size="8.8" font-weight="bold" fill="#ffffff" text-anchor="middle">6</text><rect x="592" y="223" width="1" height="2" fill="#ffffff"/><rect x="582" y="222" width="1" height="5" fill="#ffffff"/><rect x="573" y="223" width="1" height="2" fill="#ffffff"/><text x="564.0" y="226.6" font-size="8.8" font-weight="bold" fill="#ffffff" text-anchor="middle">7</text><rect x="554" y="223" width="1" height="2" fill="#ffffff"/><rect x="545" y="222" width="1" height="5" fill="#ffffff"/><rect x="535" y="223" width="1" height="2" fill="#ffffff"/><text x="526.3" y="226.6" font-size="8.8" font-weight="bold" fill="#ffffff" text-anchor="middle">8</text><rect x="516" y="223" width="1" height="2" fill="#ffffff"/><rect x="507" y="222" width="1" height="5" fill="#ffffff"/><rect x="497" y="223" width="1" height="2" fill="#ffffff"/><text x="488.5" y="226.6" font-size="8.8" font-weight="bold" fill="#ffffff" text-anchor="middle">9</text><rect x="479" y="223" width="1" height="2" fill="#ffffff"/><rect x="469" y="222" width="1" height="5" fill="#ffffff"/><rect x="460" y="223" width="1" height="2" fill="#ffffff"/><text x="450.7" y="226.6" font-size="8.8" font-weight="bold" fill="#ffffff" text-anchor="middle">10</text><rect x="441" y="223" width="1" height="2" fill="#ffffff"/><rect x="431" y="222" width="1" height="5" fill="#ffffff"/><rect x="422" y="223" width="1" height="2" fill="#ffffff"/><text x="412.9" y="226.6" font-size="8.8" font-weight="bold" fill="#ffffff" text-anchor="middle">11</text><rect x="403" y="223" width="1" height="2" fill="#ffffff"/><rect x="394" y="222" width="1" height="5" fill="#ffffff"/><rect x="384" y="223" width="1" height="2" fill="#ffffff"/><text x="375.1" y="226.6" font-size="8.8" font-weight="bold" fill="#ffffff" text-anchor="middle">12</text><rect x="365" y="223" width="1" height="2" fill="#ffffff"/><rect x="356" y="222" width="1" height="5" fill="#ffffff"/><rect x="346" y="223" width="1" height="2" fill="#ffffff"/><text x="337.4" y="226.6" font-size="8.8" font-weight="bold" fill="#ffffff" text-anchor="middle">13</text><rect x="327" y="223" width="1" height="2" fill="#ffffff"/><rect x="318" y="222" width="1" height="5" fill="#ffffff"/><rect x="309" y="223" width="1" height="2" fill="#ffffff"/><text x="299.6" y="226.6" font-size="8.8" font-weight="bold" fill="#ffffff" text-anchor="middle">14</text><rect x="290" y="223" width="1" height="2" fill="#ffffff"/><rect x="280" y="222" width="1" height="5" fill="#ffffff"/><rect x="271" y="223" width="1" height="2" fill="#ffffff"/><text x="261.8" y="226.6" font-size="8.8" font-weight="bold" fill="#ffffff" text-anchor="middle">15</text><rect x="252" y="223" width="1" height="2" fill="#ffffff"/><rect x="242" y="222" width="1" height="5" fill="#ffffff"/><rect x="233" y="223" width="1" height="2" fill="#ffffff"/><text x="224.0" y="226.6" font-size="8.8" font-weight="bold" fill="#ffffff" text-anchor="middle">16</text><rect x="214" y="223" width="1" height="2" fill="#ffffff"/><rect x="205" y="222" width="1" height="5" fill="#ffffff"/><rect x="195" y="223" width="1" height="2" fill="#ffffff"/><text x="186.2" y="226.6" font-size="8.8" font-weight="bold" fill="#ffffff" text-anchor="middle">17</text><rect x="176" y="223" width="1" height="2" fill="#ffffff"/><rect x="167" y="222" width="1" height="5" fill="#ffffff"/><rect x="157" y="223" width="1" height="2" fill="#ffffff"/><text x="148.5" y="226.6" font-size="8.8" font-weight="bold" fill="#ffffff" text-anchor="middle">18</text><rect x="139" y="223" width="1" height="2" fill="#ffffff"/></g>
<path d="M823,215 L835,215 L835,216 L829,223 L835,230 L823,230 L829,223 L823,216 Z" fill="#7b7b7b" />
<path d="M823,218.5 L829,223 L835,218.5 M823,227.5 L829,223 L835,227.5" fill="none" stroke="#3a3a3a" stroke-width="1" />
<rect x="823" y="230.5" width="12" height="6" fill="#7b7b7b" />
<path d="M562.5,225.5 L562.5,230 L568.5,230" fill="none" stroke="#8a8a8a" stroke-width="1.6" />
<rect x="-5.5" y="90.5" width="86" height="23" fill="none" stroke="#6f6f6f" stroke-width="1" rx="4" />
<path d="M71,100.5 L74,103.5 L77,100.5" fill="none" stroke="#262626" stroke-width="1.3" />
<rect x="83.5" y="90.5" width="42" height="23" fill="none" stroke="#6f6f6f" stroke-width="1" rx="4" />
<path d="M117,100.5 L120,103.5 L123,100.5" fill="none" stroke="#262626" stroke-width="1.3" />
<path d="M133.2,107.2 L138.5,94.6 L143.8,107.2 M135.402,102.916 L141.598,102.916" fill="none" stroke="#3b3b3b" stroke-width="1.15" />
<path d="M145.2,98.2 L147.2,95.8 L149.2,98.2" fill="none" stroke="#1e6ac0" stroke-width="1.2" />
<path d="M161,107.2 L165.1,97.6 L169.2,107.2 M162.794,103.936 L167.40599999999998,103.936" fill="none" stroke="#3b3b3b" stroke-width="1.15" />
<path d="M169.6,95.6 L171.6,98 L173.6,95.6" fill="none" stroke="#1e6ac0" stroke-width="1.2" />
<rect x="180" y="90" width="1" height="23" fill="#8e8e8e" />
<path d="M187.3,107.2 L191.8,97.6 L196.3,107.2 M189.23000000000002,103.936 L194.37,103.936" fill="none" stroke="#3b3b3b" stroke-width="1.15" />
<text x="196.8" y="107" font-size="11.5" fill="#3b3b3b" textLength="6.5" lengthAdjust="spacingAndGlyphs" >a</text>
<path d="M208.5,100.5 L211.5,103.5 L214.5,100.5" fill="none" stroke="#262626" stroke-width="1.3" />
<rect x="225" y="90" width="1" height="23" fill="#8e8e8e" />
<path d="M232,107.2 L237.0,94.6 L242,107.2 M234.1,102.916 L239.9,102.916" fill="none" stroke="#3b3b3b" stroke-width="1.15" />
<path d="M240,107.5 L245,101.5 L249,105 L244,111 Z" fill="#ffffff" stroke="#a0207a" stroke-width="1.4" />
<path d="M240,107.5 L242.5,104.5 L246.5,108 L244,111 Z" fill="#a0207a" />
<rect x="259" y="83" width="1" height="89" fill="#9a9a9a" />
<text x="14.5" y="138" font-size="12.5" fill="#3b3b3b" textLength="9" lengthAdjust="spacingAndGlyphs" >U</text>
<rect x="15" y="139" width="9" height="1.2" fill="#3b3b3b" />
<path d="M35,132.5 L38,135.5 L41,132.5" fill="none" stroke="#262626" stroke-width="1.3" />
<text x="53.5" y="138.5" font-size="12.5" fill="#444" textLength="14.5" lengthAdjust="spacingAndGlyphs" >ab</text>
<rect x="52" y="133.6" width="17.5" height="1" fill="#444" />
<text x="84" y="138" font-size="12.5" fill="#333" textLength="7.2" lengthAdjust="spacingAndGlyphs" font-weight="bold" >x</text>
<text x="91" y="141.8" font-size="7.5" fill="#1e6ac0" textLength="4" lengthAdjust="spacingAndGlyphs" font-weight="bold" >2</text>
<text x="110" y="138" font-size="12.5" fill="#333" textLength="7.2" lengthAdjust="spacingAndGlyphs" font-weight="bold" >x</text>
<text x="116.6" y="131.5" font-size="7.5" fill="#1e6ac0" textLength="4" lengthAdjust="spacingAndGlyphs" font-weight="bold" >2</text>
<rect x="127" y="121.5" width="1" height="24.5" fill="#8e8e8e" />
<path d="M136,139 L141.7,127.2 L147.4,139 M138.2,135 L145.2,135" fill="none" stroke="#9c9c9c" stroke-width="2.8" />
<path d="M136,139 L141.7,127.2 L147.4,139 M138.2,135 L145.2,135" fill="none" stroke="#f4f4f4" stroke-width="1.3" />
<path d="M155.4,132.5 L158.4,135.5 L161.4,132.5" fill="none" stroke="#9a9a9a" stroke-width="1.2" />
<path d="M180,136 L188,127 L191,130 L183,138 Z" fill="#ffffff" stroke="#222" stroke-width="1.2" />
<path d="M178,138 L181,134 L183,137 Z" fill="#222" />
<rect x="176" y="137.8" width="16.2" height="4.2" fill="#ffff00" />
<path d="M199.4,132.5 L202.4,135.5 L205.4,132.5" fill="none" stroke="#262626" stroke-width="1.3" />
<path d="M220.6,137.2 L225.2,127.2 L229.8,137.2 M222.564,133.79999999999998 L227.83599999999998,133.79999999999998" fill="none" stroke="#3b3b3b" stroke-width="1.15" />
<rect x="216.8" y="137.8" width="16.2" height="4.2" fill="#ff0000" />
<path d="M240.4,132.5 L243.4,135.5 L246.4,132.5" fill="none" stroke="#262626" stroke-width="1.3" />
<text x="84.4" y="172" font-size="11.6" fill="#262626" textLength="23.3" lengthAdjust="spacingAndGlyphs" >Font</text>
<path d="M248.5,171.0 L248.5,165.0 L254.5,165.0" fill="none" stroke="#333" stroke-width="1" />
<path d="M250.5,167.0 L255.5,172.0 M251.5,172.0 L255.5,172.0 L255.5,168.0" fill="none" stroke="#333" stroke-width="1" />
<rect x="272.9" y="94.9" width="10.5" height="1.3" fill="#3b3b3b" />
<rect x="272.9" y="100.9" width="10.5" height="1.3" fill="#3b3b3b" />
<rect x="272.9" y="106.9" width="10.5" height="1.3" fill="#3b3b3b" />
<rect x="285.2" y="94.0" width="3" height="3" fill="#1e6ac0" />
<rect x="285.2" y="100.0" width="3" height="3" fill="#1e6ac0" />
<rect x="285.2" y="106.0" width="3" height="3" fill="#1e6ac0" />
<path d="M295.5,100.9 L298.7,104.1 L301.9,100.9" fill="none" stroke="#262626" stroke-width="1.2" />
<rect x="313.9" y="94.9" width="10" height="1.3" fill="#3b3b3b" />
<rect x="313.9" y="100.9" width="10" height="1.3" fill="#3b3b3b" />
<rect x="313.9" y="106.9" width="10" height="1.3" fill="#3b3b3b" />
<text x="325.8" y="98" font-size="5.5" fill="#1e6ac0" font-weight="bold" >1</text>
<text x="325.6" y="104" font-size="5.5" fill="#1e6ac0" font-weight="bold" >2</text>
<text x="325.6" y="110" font-size="5.5" fill="#1e6ac0" font-weight="bold" >3</text>
<path d="M336.0,100.9 L339.2,104.1 L342.4,100.9" fill="none" stroke="#262626" stroke-width="1.2" />
<rect x="355" y="94.9" width="10" height="1.3" fill="#3b3b3b" />
<rect x="355" y="100.9" width="5.5" height="1.3" fill="#3b3b3b" />
<rect x="355" y="106.9" width="3" height="1.3" fill="#3b3b3b" />
<text x="367" y="98" font-size="5.5" fill="#1e6ac0" font-weight="bold" >1</text>
<text x="363.3" y="104" font-size="6.5" fill="#1e6ac0" font-weight="bold" >a</text>
<text x="362.5" y="110.5" font-size="6" fill="#1e6ac0" font-weight="bold" >i</text>
<path d="M375.2,100.9 L378.4,104.1 L381.59999999999997,100.9" fill="none" stroke="#262626" stroke-width="1.2" />
<rect x="392.3" y="90" width="1" height="23" fill="#8e8e8e" />
<rect x="400" y="95" width="14" height="1.2" fill="#3b3b3b" />
<rect x="400" y="107" width="14" height="1.2" fill="#3b3b3b" />
<rect x="400" y="99" width="6" height="1.2" fill="#3b3b3b" />
<rect x="400" y="103" width="6" height="1.2" fill="#3b3b3b" />
<line x1="407" y1="101.2" x2="413.5" y2="101.2" stroke="#1e6ac0" stroke-width="1.3" />
<path d="M411,98.8 L413.6,101.2 L411,103.6" fill="none" stroke="#1e6ac0" stroke-width="1.3" />
<rect x="426" y="95" width="14" height="1.2" fill="#3b3b3b" />
<rect x="426" y="107" width="14" height="1.2" fill="#3b3b3b" />
<rect x="426" y="99" width="6" height="1.2" fill="#3b3b3b" />
<rect x="426" y="103" width="6" height="1.2" fill="#3b3b3b" />
<line x1="433" y1="101.2" x2="439.5" y2="101.2" stroke="#1e6ac0" stroke-width="1.3" />
<path d="M435.6,98.8 L433,101.2 L435.6,103.6" fill="none" stroke="#1e6ac0" stroke-width="1.3" />
<rect x="447.1" y="90" width="1" height="23" fill="#8e8e8e" />
<path d="M455.5,98.5 L458.5,101.5 L455.5,104.5" fill="none" stroke="#1e6ac0" stroke-width="1.4" />
<text x="459.5" y="106" font-size="11" fill="#3b3b3b" textLength="8.5" lengthAdjust="spacingAndGlyphs" font-weight="bold" >¶</text>
<text x="482" y="106" font-size="11" fill="#3b3b3b" textLength="8.5" lengthAdjust="spacingAndGlyphs" font-weight="bold" >¶</text>
<path d="M494,98.5 L491,101.5 L494,104.5" fill="none" stroke="#1e6ac0" stroke-width="1.4" />
<rect x="502" y="90" width="1" height="23" fill="#8e8e8e" />
<text x="509" y="101.5" font-size="8.5" fill="#1e6ac0" textLength="7" lengthAdjust="spacingAndGlyphs" font-weight="bold" >A</text>
<text x="509" y="110" font-size="8.5" fill="#3b3b3b" textLength="7" lengthAdjust="spacingAndGlyphs" >Z</text>
<line x1="520.5" y1="95" x2="520.5" y2="109.5" stroke="#3b3b3b" stroke-width="1.2" />
<path d="M517.5,106.5 L520.5,109.8 L523.5,106.5" fill="none" stroke="#3b3b3b" stroke-width="1.2" />
<rect x="531.1" y="90" width="1" height="23" fill="#8e8e8e" />
<text x="540.5" y="108" font-size="14" fill="#3b3b3b" textLength="10.5" lengthAdjust="spacingAndGlyphs" font-weight="bold" >¶</text>
<rect x="565" y="83" width="1" height="89" fill="#9a9a9a" />
<rect x="272.9" y="126.7" width="14" height="1.3" fill="#3b3b3b" />
<rect x="272.9" y="131.0" width="9.5" height="1.3" fill="#3b3b3b" />
<rect x="272.9" y="134.9" width="14" height="1.3" fill="#3b3b3b" />
<rect x="272.9" y="139.0" width="9.5" height="1.3" fill="#3b3b3b" />
<rect x="299.0" y="126.7" width="14" height="1.3" fill="#3b3b3b" />
<rect x="301.25" y="131.0" width="9.5" height="1.3" fill="#3b3b3b" />
<rect x="299.0" y="134.9" width="14" height="1.3" fill="#3b3b3b" />
<rect x="301.25" y="139.0" width="9.5" height="1.3" fill="#3b3b3b" />
<rect x="325" y="126.7" width="14" height="1.3" fill="#3b3b3b" />
<rect x="329.5" y="131.0" width="9.5" height="1.3" fill="#3b3b3b" />
<rect x="325" y="134.9" width="14" height="1.3" fill="#3b3b3b" />
<rect x="329.5" y="139.0" width="9.5" height="1.3" fill="#3b3b3b" />
<rect x="351" y="126.7" width="14" height="1.3" fill="#3b3b3b" />
<rect x="351" y="131.0" width="14" height="1.3" fill="#3b3b3b" />
<rect x="351" y="134.9" width="14" height="1.3" fill="#3b3b3b" />
<rect x="351" y="139.0" width="14" height="1.3" fill="#3b3b3b" />
<path d="M371.40000000000003,132.4 L374.6,135.6 L377.8,132.4" fill="none" stroke="#262626" stroke-width="1.2" />
<rect x="388.2" y="122" width="1" height="23.599999999999994" fill="#8e8e8e" />
<line x1="396" y1="128" x2="396" y2="140" stroke="#1e6ac0" stroke-width="1.3" />
<path d="M393.8,130.2 L396,127.8 L398.2,130.2 M393.8,137.8 L396,140.2 L398.2,137.8" fill="none" stroke="#1e6ac0" stroke-width="1.3" />
<rect x="401.3" y="126.9" width="10" height="1.3" fill="#3b3b3b" />
<rect x="401.3" y="130.9" width="10" height="1.3" fill="#3b3b3b" />
<rect x="401.3" y="134.9" width="10" height="1.3" fill="#3b3b3b" />
<rect x="401.3" y="138.9" width="10" height="1.3" fill="#3b3b3b" />
<path d="M416.2,132.4 L419.4,135.6 L422.59999999999997,132.4" fill="none" stroke="#262626" stroke-width="1.2" />
<rect x="433.1" y="122" width="1" height="23.80000000000001" fill="#8e8e8e" />
<path d="M442,133 L447.5,127.5 L453,133 L447.5,138.5 Z" fill="#f4f4f4" stroke="#3b3b3b" stroke-width="1.2" />
<path d="M452,129 C455,131 456,133 455,136" fill="none" stroke="#1e6ac0" stroke-width="1.5" />
<rect x="440.5" y="138.8" width="15" height="2.5" fill="#e0e0e0" stroke="#9a9a9a" stroke-width="0.6" />
<path d="M463.3,132.4 L466.5,135.6 L469.7,132.4" fill="none" stroke="#262626" stroke-width="1.2" />
<rect x="481" y="126" width="15" height="14" fill="none" stroke="#6a6a6a" stroke-width="1" stroke-dasharray="1 1"/>
<line x1="488.5" y1="126" x2="488.5" y2="140" stroke="#6a6a6a" stroke-width="1" stroke-dasharray="1 1"/>
<line x1="481" y1="133" x2="496" y2="133" stroke="#6a6a6a" stroke-width="1" stroke-dasharray="1 1"/>
<rect x="480.5" y="140" width="16" height="1.6" fill="#111" />
<path d="M504.1,132.4 L507.3,135.6 L510.5,132.4" fill="none" stroke="#262626" stroke-width="1.2" />
<text x="378.8" y="172" font-size="11.3" fill="#262626" textLength="52" lengthAdjust="spacingAndGlyphs" >Paragraph</text>
<path d="M555.0,171.0 L555.0,165.0 L561.0,165.0" fill="none" stroke="#333" stroke-width="1" />
<path d="M557.0,167.0 L562.0,172.0 M558.0,172.0 L562.0,172.0 L562.0,168.0" fill="none" stroke="#333" stroke-width="1" />
<rect x="575.5" y="90.5" width="306" height="59" fill="none" stroke="#8f8f8f" stroke-width="1" rx="5" />
<rect x="580.7" y="96" width="64.3" height="48" fill="#ffffff" />
<clipPath id="tc0"><rect x="580.7" y="96" width="64.3" height="48"/></clipPath>
<text x="577.1" y="115.5" font-size="15" fill="#1c1c1c" font-family="Liberation Serif" textLength="60" lengthAdjust="spacingAndGlyphs" clip-path="url(#tc0)">bCcDdEe</text>
<rect x="652.8" y="96" width="64.3" height="48" fill="#ffffff" />
<clipPath id="tc1"><rect x="652.8" y="96" width="64.3" height="48"/></clipPath>
<text x="655.1999999999999" y="115.5" font-size="15" fill="#1c1c1c" font-family="Liberation Serif" textLength="53.6" lengthAdjust="spacingAndGlyphs" >CcDdEe</text>
<rect x="724.6" y="96" width="64.3" height="48" fill="#ffffff" />
<clipPath id="tc2"><rect x="724.6" y="96" width="64.3" height="48"/></clipPath>
<text x="721.0" y="115.5" font-size="15" fill="#1c1c1c" font-family="Liberation Serif" textLength="60" lengthAdjust="spacingAndGlyphs" clip-path="url(#tc2)">bCcDdEe</text>
<rect x="797" y="96" width="64.3" height="48" fill="#ffffff" />
<clipPath id="tc3"><rect x="797" y="96" width="64.3" height="48"/></clipPath>
<text x="793.4" y="115.5" font-size="15" fill="#1c1c1c" font-family="Liberation Serif" textLength="60" lengthAdjust="spacingAndGlyphs" clip-path="url(#tc3)">bCcDdEe</text>
<text x="591" y="140.5" font-size="11.8" fill="#333333" textLength="43" lengthAdjust="spacingAndGlyphs" >¶ Arabic</text>
<text x="660.6" y="140.5" font-size="11.8" fill="#333333" textLength="48.2" lengthAdjust="spacingAndGlyphs" >¶ Normal</text>
<text x="725.6" y="140.5" font-size="11.8" fill="#333333" textLength="62" lengthAdjust="spacingAndGlyphs" >¶ Poem-left</text>
<text x="798.5" y="140.5" font-size="11.8" fill="#333333" textLength="60.2" lengthAdjust="spacingAndGlyphs" >¶ poem-ri...</text>
<rect x="867.5" y="91.5" width="13.5" height="18.5" fill="#c3c3c3" stroke="#9a9a9a" stroke-width="0.8" />
<rect x="867.5" y="111" width="13.5" height="18.5" fill="#c3c3c3" stroke="#7a7a7a" stroke-width="0.8" />
<rect x="867.5" y="130.5" width="13.5" height="18.5" fill="#c3c3c3" stroke="#7a7a7a" stroke-width="0.8" />
<path d="M871.5,102 L874.2,99.3 L877,102" fill="none" stroke="#9a9a9a" stroke-width="1" />
<path d="M871.5,119 L874.2,121.7 L877,119" fill="none" stroke="#262626" stroke-width="1.2" />
<rect x="871" y="135.5" width="6.5" height="1" fill="#262626" />
<path d="M871.5,138.5 L874.2,141.2 L877,138.5" fill="none" stroke="#262626" stroke-width="1.1" />
<text x="705.9" y="171.6" font-size="11.3" fill="#262626" textLength="29.1" lengthAdjust="spacingAndGlyphs" >Styles</text>
<path d="M880.5,171.0 L880.5,165.0 L886.5,165.0" fill="none" stroke="#333" stroke-width="1" />
<path d="M882.5,167.0 L887.5,172.0 M883.5,172.0 L887.5,172.0 L887.5,168.0" fill="none" stroke="#333" stroke-width="1" />
<rect x="891.3" y="83" width="1" height="89" fill="#9a9a9a" />
<text x="919.5" y="172" font-size="11.3" fill="#262626" >E</text>
<circle cx="914" cy="91.5" r="5.2" fill="none" stroke="#333" stroke-width="1.3"/>
<line x1="910.2" y1="95.5" x2="904.5" y2="101.5" stroke="#333" stroke-width="1.5" />
<text x="910" y="120" font-size="8.5" fill="#a01a6a" font-weight="bold" >b</text>
<text x="913.5" y="128" font-size="8.5" fill="#1e6ac0" font-weight="bold" >c</text>
<path d="M907,117 C904,120 905,125 910,126" fill="none" stroke="#1e6ac0" stroke-width="1.3" />
<path d="M908,124 L910.5,126 L908.3,128.5" fill="none" stroke="#1e6ac0" stroke-width="1.1" />
<path d="M905.5,139.5 L905.5,152 L908.5,149 L911,153.5 L913,152.5 L910.8,148.3 L915,148 Z" fill="#f2f2f2" stroke="#333" stroke-width="1.1" />
<text x="1.2" y="200" font-size="11.6" fill="#1f1f1f" textLength="22.5" lengthAdjust="spacingAndGlyphs" >Save</text>
<path d="M45,190 L45,195.5 L50.5,195.5" fill="none" stroke="#333" stroke-width="1.2" />
<path d="M45.5,195 C48,190.5 55.5,190 56.8,195.8 C57.5,199.5 54,202.5 50,201.5" fill="none" stroke="#333" stroke-width="1.2" />
<text x="62.3" y="200" font-size="11.7" fill="#1f1f1f" textLength="144.7" lengthAdjust="spacingAndGlyphs" >Undo Paragraph Formatting</text>
<path d="M216.7,194.6 L219.5,197.4 L222.3,194.6" fill="none" stroke="#262626" stroke-width="1.2" />
<path d="M241,190 C236,191 234,197 237,200.5 C238.5,202 240,202.5 242,202.5" fill="none" stroke="#8f8f8f" stroke-width="1.1" />
<path d="M237,188.5 L241,190.2 L238.5,193.5" fill="none" stroke="#8f8f8f" stroke-width="1.1" />
<path d="M248,190.5 C251.5,193 251.5,199 248,202" fill="none" stroke="#8f8f8f" stroke-width="1.1" />
<text x="255.1" y="200" font-size="11.6" fill="#8a8a8a" textLength="65.8" lengthAdjust="spacingAndGlyphs" >Can't Repeat</text>
<text x="340" y="201" font-size="12" fill="#333" textLength="11.5" lengthAdjust="spacingAndGlyphs" >ab</text>
<text x="352" y="194" font-size="6.5" fill="#c00000" font-weight="bold" >1</text>
<text x="359.6" y="200" font-size="11.6" fill="#1f1f1f" textLength="78.8" lengthAdjust="spacingAndGlyphs" >Insert Footnote</text>
<path d="M459,189 L466,189 L470.5,193.5 L470.5,204.5 L459,204.5 Z" fill="#f0f0f0" stroke="#333" stroke-width="1" />
<path d="M466,189 L466,193.5 L470.5,193.5" fill="none" stroke="#333" stroke-width="1" />
<text x="477.5" y="200" font-size="11.6" fill="#1f1f1f" textLength="109" lengthAdjust="spacingAndGlyphs" >New Blank Document</text>
<text x="603.4" y="200" font-size="11.6" fill="#1f1f1f" textLength="25.3" lengthAdjust="spacingAndGlyphs" >Font:</text>
<rect x="636" y="184.5" width="83.5" height="21" fill="#c0c0c0" stroke="#6f6f6f" stroke-width="1" rx="3" />
<path d="M710.6,193.7 L713.2,196.3 L715.8000000000001,193.7" fill="none" stroke="#262626" stroke-width="1.2" />
<rect x="728.9" y="190.5" width="10.8" height="10.5" fill="#c9c9c9" stroke="#555" stroke-width="1" rx="1.5" />
<text x="745.5" y="200" font-size="11.6" fill="#1f1f1f" textLength="82.9" lengthAdjust="spacingAndGlyphs" >Navigation Pane</text>
<path d="M840.5,202.5 L845.75,190.5 L851,202.5 M842.685,198.42 L848.815,198.42" fill="none" stroke="#444" stroke-width="1.0" />
<path d="M846.5,201.5 L855.5,192.5" fill="none" stroke="#555" stroke-width="2.6" />
<path d="M846.5,201.5 L855.5,192.5" fill="none" stroke="#e6e6e6" stroke-width="1.0" />
<path d="M842,203.5 Q843,199.5 846.5,199.8 L848,201.5 Q847,205 842,203.5 Z" fill="#1e6ac0" />
<text x="861.7" y="200" font-size="11.6" fill="#1f1f1f" textLength="27.8" lengthAdjust="spacingAndGlyphs" >Styles</text>
<path d="M894.0,194.7 L896.6,197.3 L899.2,194.7" fill="none" stroke="#262626" stroke-width="1.2" />
<rect x="914.5" y="189.5" width="12" height="14.5" fill="#f4f4f4" stroke="#333" stroke-width="1" />
<line x1="914.5" y1="194.3" x2="926" y2="194.3" stroke="#333" stroke-width="1" />
<line x1="914.5" y1="199" x2="926" y2="199" stroke="#333" stroke-width="1" />
<line x1="918.5" y1="189.5" x2="918.5" y2="204" stroke="#333" stroke-width="1" />
<path d="M919.5,198 L923,193.5 L923,198 Z" fill="#1e6ac0" />
<defs><filter id="sh" x="-10%" y="-10%" width="120%" height="120%"><feGaussianBlur stdDeviation="1.2"/></filter></defs>
<clipPath id="dlgclip"><rect x="10" y="202" width="297.5" height="349" rx="8.5"/></clipPath>
<g clip-path="url(#dlgclip)">
<rect x="10" y="202" width="298" height="350" fill="#f0f0f0" />
<rect x="10" y="202" width="298" height="31" fill="#ffffff" />
</g>
<rect x="10.5" y="202.5" width="296.5" height="348" fill="none" stroke="#b4b4b4" stroke-width="1" rx="8" />
<text x="19" y="221.9" font-size="12.6" fill="#8c8c8c" textLength="22.6" lengthAdjust="spacingAndGlyphs" >Tabs</text>
<text x="236.2" y="221.6" font-size="11" fill="#8c8c8c" textLength="5.3" lengthAdjust="spacingAndGlyphs" >?</text>
<path d="M279.5,212.5 L289,222 M289,212.5 L279.5,222" fill="none" stroke="#8c8c8c" stroke-width="1.1" />
<text x="17.3" y="250.8" font-size="11.7" fill="#000000" textLength="92.7" lengthAdjust="spacingAndGlyphs" >Tab stop position:</text>
<rect x="17.5" y="252.4" width="6" height="1" fill="#000000" />
<text x="178.7" y="251.3" font-size="11.7" fill="#000000" textLength="90.8" lengthAdjust="spacingAndGlyphs" >Default tab stops:</text>
<rect x="198.5" y="252.9" width="5" height="1" fill="#000000" />
<rect x="17.5" y="256.5" width="151" height="20" fill="#ffffff" stroke="#7a7a7a" stroke-width="1" />
<rect x="17" y="275.5" width="152" height="1.2" fill="#5a5a5a" />
<path d="M151.3,262 L154,270.5 L156.7,262" fill="none" stroke="#111" stroke-width="1.1" />
<path d="M158.3,269 Q158.8,270.5 157.6,272.5" fill="none" stroke="#111" stroke-width="1" />
<path d="M163,262 Q160,265.5 160.6,269 Q161.5,271 163,270.7 Q165.5,270.2 165.6,268 Q165.3,265.5 163,262 Z" fill="none" stroke="#111" stroke-width="1.1" />
<rect x="17.5" y="276.5" width="151" height="81" fill="#ffffff" stroke="#7a7a7a" stroke-width="1" />
<rect x="17" y="275.5" width="152" height="1.2" fill="#5a5a5a" />
<rect x="151" y="278" width="17" height="79" fill="#f0f0f0" />
<path d="M154.8,290 L159,285 L163.2,290 Z" fill="#a3a3a3" />
<path d="M154.8,345 L159,350 L163.2,345 Z" fill="#a3a3a3" />
<rect x="178.5" y="256.5" width="122" height="19.5" fill="#ffffff" stroke="#7a7a7a" stroke-width="1" />
<text x="181.4" y="270.5" font-size="11.7" fill="#000000" textLength="32.3" lengthAdjust="spacingAndGlyphs" >0/5 cm</text>
<rect x="284.5" y="257.5" width="15" height="18" fill="#f0f0f0" />
<rect x="284.5" y="257.5" width="14.5" height="8.5" fill="#f2f2f2" stroke="#9a9a9a" stroke-width="0.8" />
<rect x="284.5" y="266" width="14.5" height="9" fill="#f2f2f2" stroke="#9a9a9a" stroke-width="0.8" />
<path d="M288.5,263.8 L291.7,260.3 L295,263.8 Z" fill="#333" />
<path d="M288.5,268.8 L291.7,272.3 L295,268.8 Z" fill="#333" />
<text x="178.3" y="297.8" font-size="11.7" fill="#000000" textLength="121.9" lengthAdjust="spacingAndGlyphs" >Tab stops to be cleared:</text>
<text x="17.4" y="371.8" font-size="11.7" fill="#000000" textLength="52.5" lengthAdjust="spacingAndGlyphs" >Alignment</text>
<rect x="75.4" y="367" width="225.5" height="1" fill="#d9d9d9" />
<circle cx="32.4" cy="388.5" r="6.1" fill="#fafafa" stroke="#5f5f5f" stroke-width="1"/>
<text x="43.1" y="392.5" font-size="11.7" fill="#000000" textLength="27.7" lengthAdjust="spacingAndGlyphs" >Right</text>
<rect x="43.3" y="394.1" width="6.3" height="1" fill="#000000" />
<circle cx="127.3" cy="388.5" r="6.1" fill="#fafafa" stroke="#5f5f5f" stroke-width="1"/>
<text x="138.4" y="392.5" font-size="11.7" fill="#000000" textLength="33.1" lengthAdjust="spacingAndGlyphs" >Center</text>
<rect x="138.6" y="394.1" width="7" height="1" fill="#000000" />
<circle cx="222.5" cy="388.5" r="6.6" fill="#0f5fb7"/>
<circle cx="222.5" cy="388.5" r="3.1" fill="#ffffff"/>
<text x="233.3" y="392.5" font-size="11.7" fill="#000000" textLength="18.7" lengthAdjust="spacingAndGlyphs" >Left</text>
<rect x="233.5" y="394.1" width="5.5" height="1" fill="#000000" />
<circle cx="32.4" cy="408" r="6.1" fill="#fafafa" stroke="#5f5f5f" stroke-width="1"/>
<text x="43.1" y="412" font-size="11.7" fill="#000000" textLength="40" lengthAdjust="spacingAndGlyphs" >Decimal</text>
<rect x="43.3" y="413.6" width="7.3" height="1" fill="#000000" />
<circle cx="127.3" cy="408" r="6.1" fill="#fafafa" stroke="#5f5f5f" stroke-width="1"/>
<text x="138.4" y="412" font-size="11.7" fill="#000000" textLength="15.6" lengthAdjust="spacingAndGlyphs" >Bar</text>
<rect x="138.6" y="413.6" width="6.3" height="1" fill="#000000" />
<text x="17.1" y="435.2" font-size="11.7" fill="#000000" textLength="34.2" lengthAdjust="spacingAndGlyphs" >Leader</text>
<rect x="56.5" y="430" width="244.5" height="1" fill="#d9d9d9" />
<circle cx="32.4" cy="451.2" r="6.6" fill="#0f5fb7"/>
<circle cx="32.4" cy="451.2" r="3.1" fill="#ffffff"/>
<text x="43.1" y="455.5" font-size="11.7" fill="#000000" textLength="36.1" lengthAdjust="spacingAndGlyphs" >1 None</text>
<rect x="43.3" y="457.1" width="5.5" height="1" fill="#000000" />
<circle cx="127.3" cy="451.2" r="6.1" fill="#fafafa" stroke="#5f5f5f" stroke-width="1"/>
<text x="138.4" y="455.5" font-size="11.7" fill="#000000" textLength="29.2" lengthAdjust="spacingAndGlyphs" >2 .......</text>
<rect x="138.6" y="457.1" width="5.5" height="1" fill="#000000" />
<circle cx="222.5" cy="451.2" r="6.1" fill="#fafafa" stroke="#5f5f5f" stroke-width="1"/>
<text x="233.3" y="455.5" font-size="11.7" fill="#000000" textLength="36.7" lengthAdjust="spacingAndGlyphs" >3 -------</text>
<rect x="233.5" y="457.1" width="5.5" height="1" fill="#000000" />
<circle cx="32.4" cy="470.7" r="6.1" fill="#fafafa" stroke="#5f5f5f" stroke-width="1"/>
<text x="43.1" y="475" font-size="11.7" fill="#000000" textLength="6" lengthAdjust="spacingAndGlyphs" >4</text>
<rect x="43.3" y="476.6" width="5.5" height="1" fill="#000000" />
<rect x="52" y="476.6" width="4" height="1" fill="#000000" />
<rect x="56.8" y="476.6" width="4" height="1" fill="#000000" />
<rect x="61.6" y="476.6" width="4" height="1" fill="#000000" />
<rect x="66.4" y="476.6" width="4" height="1" fill="#000000" />
<rect x="58.6" y="487.7" width="72.8" height="20.8" fill="#eef5fc" stroke="#1c6ac4" stroke-width="1.3" rx="3.5" />
<text x="86.5" y="502.29999999999995" font-size="11.7" fill="#000000" textLength="17" lengthAdjust="spacingAndGlyphs" >Set</text>
<rect x="86.5" y="503.4" width="6.5" height="0.9" fill="#000000" />
<rect x="142.8" y="487.7" width="72.4" height="20.8" fill="#fdfdfd" stroke="#c4c4c4" stroke-width="1" rx="3.5" />
<rect x="145.3" y="507.7" width="67.4" height="0.8" fill="#a8a8a8" />
<text x="165.5" y="502.29999999999995" font-size="11.7" fill="#000000" textLength="27" lengthAdjust="spacingAndGlyphs" >Clear</text>
<rect x="178.0" y="503.4" width="6.5" height="0.9" fill="#000000" />
<rect x="226.6" y="487.7" width="72.1" height="20.8" fill="#eef5fc" stroke="#1c6ac4" stroke-width="1.3" rx="3.5" />
<text x="240.64999999999998" y="502.29999999999995" font-size="11.7" fill="#000000" textLength="44" lengthAdjust="spacingAndGlyphs" >Clear All</text>
<rect x="272.65" y="503.4" width="7" height="0.9" fill="#000000" />
<rect x="142.8" y="521.5" width="72.4" height="20.5" fill="#fdfdfd" stroke="#1c6ac4" stroke-width="1.3" rx="3.5" />
<text x="171.0" y="535.95" font-size="11.7" fill="#000000" textLength="16" lengthAdjust="spacingAndGlyphs" >OK</text>
<rect x="226.6" y="521.5" width="72.1" height="20.5" fill="#fdfdfd" stroke="#c4c4c4" stroke-width="1" rx="3.5" />
<rect x="229.1" y="541.2" width="67.1" height="0.8" fill="#a8a8a8" />
<text x="245.14999999999998" y="535.95" font-size="11.7" fill="#000000" textLength="35" lengthAdjust="spacingAndGlyphs" >Cancel</text>
<clipPath id="mbclip"><rect x="423" y="327" width="218" height="115" rx="7.5"/></clipPath>
<g clip-path="url(#mbclip)">
<rect x="422" y="326" width="220" height="115" fill="#f0f0f0" />
<rect x="422" y="326" width="220" height="32" fill="#ffffff" />
</g>
<rect x="423.5" y="327.5" width="217" height="113.5" fill="none" stroke="#b4b4b4" stroke-width="1" rx="7" />
<text x="432.2" y="346.7" font-size="12" fill="#000000" textLength="82.4" lengthAdjust="spacingAndGlyphs" >Microsoft Word</text>
<path d="M620,337 L630,347 M630,337 L620,347" fill="none" stroke="#111" stroke-width="1.1" />
<defs><linearGradient id="wg" x1="0" y1="0" x2="0" y2="1"><stop offset="0" stop-color="#ffe15a"/><stop offset="1" stop-color="#f6b40e"/></linearGradient></defs>
<path d="M457,374 Q455.8,373 454.6,374.6 L443.6,397.5 Q442.8,400.5 445.5,400.7 L468.5,400.7 Q471.2,400.5 470.4,397.5 L459.4,374.6 Q458.2,373 457,374 Z" fill="url(#wg)" stroke="#d89a06" stroke-width="0.8" />
<rect x="455.8" y="381" width="2.4" height="11.5" fill="#1a1a1a" rx="1" />
<circle cx="457" cy="396.2" r="1.5" fill="#1a1a1a"/>
<text x="488.9" y="392.3" font-size="11.7" fill="#000000" textLength="137.9" lengthAdjust="spacingAndGlyphs" >This is not a valid tab stop.</text>
<rect x="499.5" y="413.6" width="64.8" height="19.7" fill="#fdfdfd" stroke="#1c6ac4" stroke-width="1.3" rx="3.5" />
<text x="523.9" y="427.65000000000003" font-size="11.7" fill="#000000" textLength="16" lengthAdjust="spacingAndGlyphs" >OK</text>
</svg></body></html>
